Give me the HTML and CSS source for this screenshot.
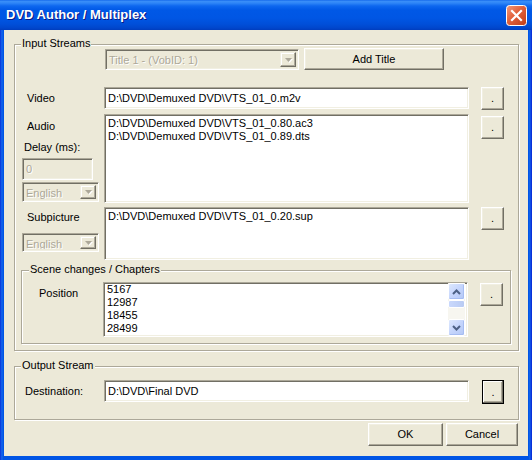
FILE: index.html
```html
<!DOCTYPE html>
<html>
<head>
<meta charset="utf-8">
<title>DVD Author / Multiplex</title>
<link rel="stylesheet" href="styles.css">
</head>
<body>
<div class="window">
  <div class="titlebar">
    <span class="title">DVD Author / Multiplex</span>
    <span class="close">
      <svg width="21" height="21" viewBox="0 0 21 21">
        <defs>
          <linearGradient id="cg" x1="0" y1="0" x2="1" y2="1">
            <stop offset="0" stop-color="#f29a7c"/>
            <stop offset="0.45" stop-color="#e2613b"/>
            <stop offset="1" stop-color="#c13c16"/>
          </linearGradient>
        </defs>
        <rect x="0.5" y="0.5" width="20" height="20" rx="3" fill="url(#cg)" stroke="#fff"/>
        <path d="M6 6 L15 15 M15 6 L6 15" stroke="#fff" stroke-width="2.2" stroke-linecap="square"/>
      </svg>
    </span>
  </div>
  <div class="client">
    <div class="group input-group">
      <span class="caption">Input Streams</span>
      <div class="title-row">
        <div class="combo disabled title-combo">
          <span class="combo-text">Title 1 - (VobID: 1)</span>
          <span class="drop"><svg width="7" height="4" viewBox="0 0 7 4"><path d="M0 0h7L3.5 4z"/></svg></span>
        </div>
        <div class="btn add-title">Add Title</div>
      </div>

      <div class="row video-row">
        <div class="labels"><span class="label">Video</span></div>
        <div class="edit field video-edit">D:\DVD\Demuxed DVD\VTS_01_0.m2v</div>
        <div class="btn dots">.</div>
      </div>

      <div class="row audio-row">
        <div class="labels">
          <span class="label audio-label">Audio</span>
          <span class="label delay-label">Delay (ms):</span>
          <div class="edit disabled delay-edit">0</div>
          <div class="combo disabled lang-combo">
            <span class="combo-text">English</span>
            <span class="drop"><svg width="7" height="4" viewBox="0 0 7 4"><path d="M0 0h7L3.5 4z"/></svg></span>
          </div>
        </div>
        <div class="edit field list audio-list">
          <div class="item">D:\DVD\Demuxed DVD\VTS_01_0.80.ac3</div>
          <div class="item">D:\DVD\Demuxed DVD\VTS_01_0.89.dts</div>
        </div>
        <div class="btn dots audio-dots">.</div>
      </div>

      <div class="row sub-row">
        <div class="labels">
          <span class="label sub-label">Subpicture</span>
          <div class="combo disabled lang-combo sub-combo">
            <span class="combo-text">English</span>
            <span class="drop"><svg width="7" height="4" viewBox="0 0 7 4"><path d="M0 0h7L3.5 4z"/></svg></span>
          </div>
        </div>
        <div class="edit field list sub-list">
          <div class="item">D:\DVD\Demuxed DVD\VTS_01_0.20.sup</div>
        </div>
        <div class="btn dots">.</div>
      </div>

      <div class="group scene-group">
        <span class="caption">Scene changes / Chapters</span>
        <div class="row scene-row">
          <div class="labels scene-labels"><span class="label">Position</span></div>
          <div class="edit field list scene-list">
            <div class="items">
              <div class="item">5167</div>
              <div class="item">12987</div>
              <div class="item">18455</div>
              <div class="item">28499</div>
            </div>
            <div class="scrollbar">
              <div class="sb-btn"><svg width="9" height="6" viewBox="0 0 9 6"><path d="M1 5L4.5 1.5L8 5" fill="none" stroke="#4d6185" stroke-width="2"/></svg></div>
              <div class="sb-thumb"></div>
              <div class="sb-track"></div>
              <div class="sb-btn"><svg width="9" height="6" viewBox="0 0 9 6"><path d="M1 1L4.5 4.5L8 1" fill="none" stroke="#4d6185" stroke-width="2"/></svg></div>
            </div>
          </div>
          <div class="btn dots scene-dots">.</div>
        </div>
      </div>
    </div>

    <div class="group output-group">
      <span class="caption">Output Stream</span>
      <div class="row dest-row">
        <div class="labels dest-labels"><span class="label">Destination:</span></div>
        <div class="edit field dest-edit">D:\DVD\Final DVD</div>
        <div class="btn dots default">.</div>
      </div>
    </div>

    <div class="actions">
      <div class="btn ok">OK</div>
      <div class="btn cancel">Cancel</div>
    </div>
  </div>
</div>
</body>
</html>
```
FILE: styles.css
```css
* { box-sizing: border-box; margin: 0; padding: 0; }
html, body { width: 532px; height: 460px; overflow: hidden; }
body {
  font-family: "Liberation Sans", Arial, sans-serif;
  font-size: 11px;
  line-height: 13px;
  color: #000;
  background: #0a48d8;
}
.window {
  width: 532px;
  height: 460px;
  display: flex;
  flex-direction: column;
  background: linear-gradient(to right, #0831d9 0, #166aee 2px, #0055e5 3px, #0055e5 529px, #166aee 530px, #0831d9 531px);
}
.titlebar {
  height: 30px;
  flex: none;
  display: flex;
  align-items: center;
  justify-content: space-between;
  padding: 0 5px 0 6px;
  background: linear-gradient(to bottom, #0a5fe8 0px, #3b8ff8 1px, #2f86f7 3px, #0d67ef 6px, #0058e6 10px, #0056e4 18px, #004fd9 24px, #0046cc 28px, #003dbd 30px);
}
.title {
  font-weight: bold;
  font-size: 13px;
  color: #fff;
  text-shadow: 1px 1px #0a1883;
  margin-top: -1px;
}
.close { width: 21px; height: 21px; display: block; margin-top: 1px; }
.close svg { display: block; }

.client {
  flex: 1;
  margin: 0 4px 4px 4px;
  background: #ece9d8;
  display: flex;
  flex-direction: column;
  align-items: flex-start;
}

/* group boxes */
.group {
  border: 1px solid #aca899;
  box-shadow: inset 1px 1px #fff, 1px 1px #fff;
  display: flex;
  flex-direction: column;
  align-items: flex-start;
}
.caption {
  align-self: flex-start;
  height: 13px;
  margin: -8px 0 -5px -1px;
  padding: 0 1px;
  background: #ece9d8;
  white-space: nowrap;
}
.input-group {
  margin: 14px 0 0 10px;
  width: 505px;
  padding: 0 0 6px 7px;
}
.output-group {
  margin: 15px 0 0 10px;
  width: 505px;
  padding: 0 0 15px 7px;
}
.scene-group {
  margin-top: 10px;
  margin-left: -1px;
  width: 490px;
  padding: 0 0 6px 0;
}
.scene-group .caption { margin-left: 7px; }

/* controls */
.btn {
  display: flex;
  align-items: center;
  justify-content: center;
  background: #ece9d8;
  border: 1px solid;
  border-color: #fff #716f64 #716f64 #fff;
  box-shadow: inset -1px -1px #aca899, inset 1px 1px #f1efe2;
  flex: none;
}
.btn.default {
  border: 1px solid #000;
  box-shadow: inset -1px -1px #716f64, inset 1px 1px #fff, inset -2px -2px #aca899;
}
.edit {
  background: #fff;
  border: 1px solid;
  border-color: #aca899 #fff #fff #aca899;
  box-shadow: inset 1px 1px #716f64, inset -1px -1px #f1efe2;
  padding: 4px 3px 0 3px;
  white-space: nowrap;
  overflow: hidden;
  flex: none;
}
.edit.disabled { background: #ece9d8; }
.disabled .combo-text, .edit.disabled {
  color: #aca899;
  text-shadow: 1px 1px #fff;
}
.combo {
  display: flex;
  align-items: stretch;
  background: #ece9d8;
  border: 1px solid;
  border-color: #aca899 #fff #fff #aca899;
  box-shadow: inset 1px 1px #716f64, inset -1px -1px #f1efe2;
  padding: 2px;
  flex: none;
}
.combo-text {
  flex: 1;
  padding: 2px 0 0 1px;
  white-space: nowrap;
  overflow: hidden;
}
.drop {
  width: 16px;
  flex: none;
  display: flex;
  align-items: center;
  justify-content: center;
  background: #ece9d8;
  border: 1px solid;
  border-color: #f1efe2 #716f64 #716f64 #f1efe2;
  box-shadow: inset -1px -1px #aca899, inset 1px 1px #fff;
}
.drop svg { fill: #aca899; filter: drop-shadow(1px 1px 0 #fff); }

.title-row {
  display: flex;
  align-items: flex-start;
  margin-top: 3px;
  padding-left: 83px;
}
.title-combo { width: 194px; height: 21px; margin-top: 1px; }
.add-title { width: 140px; height: 22px; margin-left: 5px; }

.row { display: flex; align-items: flex-start; }
.labels {
  width: 82px;
  flex: none;
  display: flex;
  flex-direction: column;
  align-items: flex-start;
}
.label { padding-left: 5px; white-space: nowrap; }
.field { width: 365px; }
.dots { width: 23px; height: 23px; margin-left: 12px; }

.video-row { margin-top: 17px; }
.video-row .label { margin-top: 5px; }
.video-edit { height: 22px; }

.audio-row { margin-top: 4px; }
.audio-label { margin-top: 6px; }
.delay-label { margin-top: 8px; padding-left: 2px; }
.delay-edit { width: 71px; height: 22px; margin-top: 4px; }
.lang-combo { width: 77px; height: 20px; margin-top: 2px; }
.audio-list { height: 89px; }
.audio-dots { margin-top: 2px; }
.list { padding: 2px 3px 0 3px; }

.sub-row { margin-top: 4px; }
.sub-label { margin-top: 4px; }
.sub-combo { margin-top: 9px; height: 19px; }
.sub-list { height: 53px; }

.scene-row { margin-top: 11px; }
.scene-labels { width: 81px; }
.scene-labels .label { padding-left: 17px; margin-top: 5px; }
.scene-list {
  height: 55px;
  display: flex;
  padding: 0 2px 0 3px;
}
.items { flex: 1; }
.scene-dots { margin-top: 1px; }

.scrollbar {
  width: 17px;
  flex: none;
  display: flex;
  flex-direction: column;
  background: #f4f3ee;
}
.sb-btn {
  height: 17px;
  flex: none;
  display: flex;
  align-items: center;
  justify-content: center;
  border: 1px solid #fff;
  border-radius: 2px;
  background: linear-gradient(135deg, #dde8fe 0%, #c5d5fc 50%, #b4c8f6 100%);
  box-shadow: inset -1px -1px #a6bdf2;
}
.sb-thumb {
  height: 8px;
  flex: none;
  border: 1px solid #fff;
  border-radius: 2px;
  background: linear-gradient(to right, #c9d8fc, #b9cbf3);
}
.sb-track { flex: 1; background: #f7f6f0; }

.dest-row { margin-top: 13px; }
.dest-labels .label { padding-left: 3px; margin-top: 5px; }
.dest-edit { height: 22px; }
.default { width: 22px; height: 24px; margin-left: 13px; }

.actions {
  display: flex;
  gap: 3px;
  margin: 3px 0 0 364px;
}
.ok { width: 75px; height: 23px; }
.cancel { width: 72px; height: 23px; }
```
